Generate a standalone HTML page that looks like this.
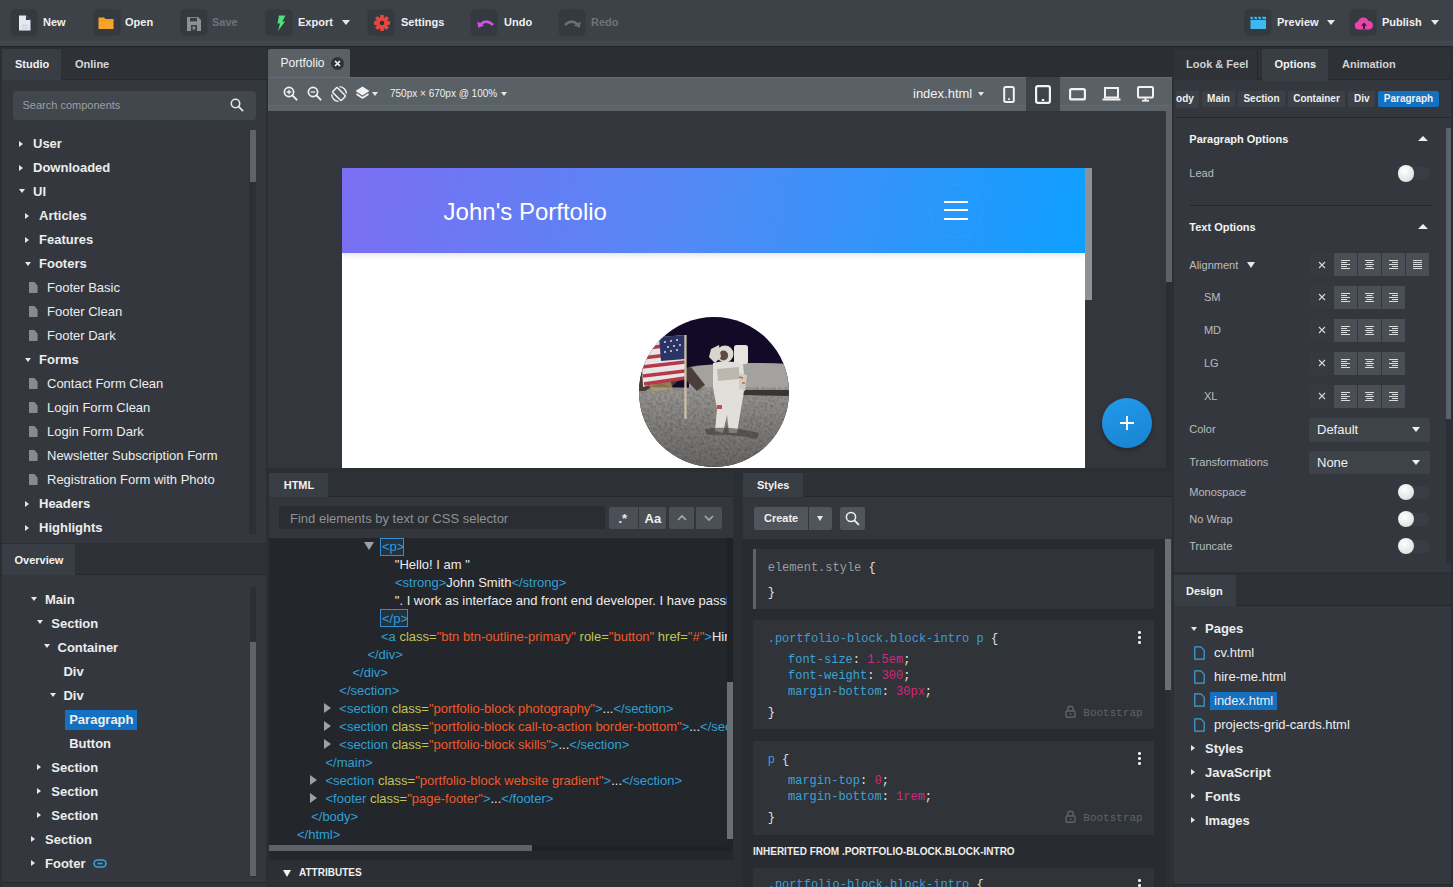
<!DOCTYPE html>
<html><head><meta charset="utf-8">
<style>
*{box-sizing:border-box;margin:0;padding:0}
html,body{width:1453px;height:887px;overflow:hidden}
body{background:#2b2e33;font-family:"Liberation Sans",sans-serif;color:#e8e8e8;position:relative}
.a{position:absolute}
.b{font-weight:bold}
.t{white-space:nowrap;line-height:1}
.ib{width:24px;height:22.5px;top:11.3px;background:#353940;border-radius:3px;box-shadow:0 0 2px 1px rgba(40,44,50,.6)}
.tl{top:17px;font-size:11px;font-weight:bold;color:#f0f0f0}
.tl.dis{color:#6e7378}
.car{width:0;height:0;border-left:4px solid transparent;border-right:4px solid transparent;border-top:5px solid #e8e8e8}
.pnl{background:#34383e}
.tabbar{background:#2e3237}
.tab{font-size:11px;font-weight:bold;color:#f2f2f2}
.tri-r{width:0;height:0;border-top:3.5px solid transparent;border-bottom:3.5px solid transparent;border-left:4px solid #e8e8e8}
.tri-d{width:0;height:0;border-left:3.5px solid transparent;border-right:3.5px solid transparent;border-top:4px solid #e8e8e8}
.tr{font-size:13px;color:#eceded}
.fi{width:9px;height:11px;background:#868b90;clip-path:polygon(0 0,65% 0,100% 30%,100% 100%,0 100%)}
.sb{background:#2c3035}
.sbt{background:#5f6469}
</style></head><body>
<div class="a" style="left:0;top:0;width:1453px;height:47px;background:#3d4249;border-bottom:1px solid #24282d"></div>
<div class="a" style="left:0;top:41px;width:1453px;height:5px;background:#41464c;border-top:1px solid #464b51"></div>
<div class="a ib" style="left:12px"></div>
<svg class="a" style="left:17.8px;top:15.2px" width="13" height="16" viewBox="0 0 13 16"><path d="M1 0.5H8L12.5 5V15.5H1Z" fill="#e4e9f1"/><path d="M8 0.5L12.5 5H8Z" fill="#2a3a5a"/><path d="M3 10.5H10.5M3 13H10.5M5.5 9V15.5M8 9V15.5" stroke="#c9ced6" stroke-width="0.6"/></svg>
<div class="a t tl" style="left:43px">New</div>
<div class="a ib" style="left:95px"></div>
<svg class="a" style="left:98.4px;top:15.2px" width="16" height="15" viewBox="0 0 16 15"><path d="M0.5 2.5H6L7.5 4H15.5V14H0.5Z" fill="#f7a42c"/><path d="M0.5 5.5H15.5" stroke="#e89520" stroke-width="0.6"/></svg>
<div class="a t tl" style="left:125px">Open</div>
<div class="a ib" style="left:182px"></div>
<svg class="a" style="left:186px;top:15.5px" width="16" height="16" viewBox="0 0 16 16"><path d="M1 1H12L15 4V15H1Z" fill="#8d9196"/><rect x="4" y="1.8" width="7" height="3.6" fill="#3a3e44"/><rect x="5" y="9" width="6" height="6" fill="#3a3e44"/><rect x="6.6" y="10.5" width="2.6" height="3" fill="#8d9196"/></svg>
<div class="a t tl dis" style="left:212px">Save</div>
<div class="a ib" style="left:266.7px"></div>
<svg class="a" style="left:272.5px;top:15.2px" width="16" height="16.5" viewBox="0 0 16 16.5"><path d="M6 0.5H12.5L9.3 6.5H12L5 16L7 8.5H4.5Z" fill="#4fe07a"/></svg>
<div class="a t tl" style="left:298px">Export</div>
<div class="a ib" style="left:369px"></div>
<svg class="a" style="left:373.8px;top:15px" width="16" height="16" viewBox="0 0 16 16"><g transform="translate(8 8)" fill="#e8463f"><circle r="5.6"/><rect x="-1.9" y="-8" width="3.8" height="16" rx="0.8"/><rect x="-1.9" y="-8" width="3.8" height="16" rx="0.8" transform="rotate(45)"/><rect x="-1.9" y="-8" width="3.8" height="16" rx="0.8" transform="rotate(90)"/><rect x="-1.9" y="-8" width="3.8" height="16" rx="0.8" transform="rotate(135)"/><circle r="2.3" fill="#2f3338"/></g></svg>
<div class="a t tl" style="left:401px">Settings</div>
<div class="a ib" style="left:472.3px"></div>
<svg class="a" style="left:476.5px;top:17.5px" width="17" height="10" viewBox="0 0 17 10"><path d="M3.5 6.5Q9.5 0.5 16 7" fill="none" stroke="#d64fe6" stroke-width="2.6"/><path d="M0.3 3.5L1.2 9.8L7.2 7.6Z" fill="#d64fe6"/></svg>
<div class="a t tl" style="left:504px">Undo</div>
<div class="a ib" style="left:560px"></div>
<svg class="a" style="left:564px;top:17.5px" width="17" height="10" viewBox="0 0 17 10"><path d="M13.5 6.5Q7.5 0.5 1 7" fill="none" stroke="#6a6f74" stroke-width="2.6"/><path d="M16.7 3.5L15.8 9.8L9.8 7.6Z" fill="#6a6f74"/></svg>
<div class="a t tl dis" style="left:591px">Redo</div>
<div class="a ib" style="left:1246px"></div>
<svg class="a" style="left:1249.8px;top:16.2px" width="17" height="14" viewBox="0 0 17 14"><rect x="0.5" y="4" width="15.5" height="9" fill="#3fb8f0"/><path d="M0.5 0.8H16V3.2H0.5Z" fill="#3fb8f0"/><path d="M3 0.8L4.5 3.2M7 0.8L8.5 3.2M11 0.8L12.5 3.2" stroke="#20262c" stroke-width="1.1"/></svg>
<div class="a t tl" style="left:1277px">Preview</div>
<div class="a ib" style="left:1351px"></div>
<svg class="a" style="left:1353.5px;top:15.5px" width="20" height="15" viewBox="0 0 20 15"><path d="M4.5 13.5A4 4 0 0 1 4 5.6A5.5 5.5 0 0 1 14.5 5A4.3 4.3 0 0 1 15.5 13.5Z" fill="#ea44a8"/><path d="M10 6.5L13 9.8H11V13H9V9.8H7Z" fill="#3a2030"/></svg>
<div class="a t tl" style="left:1382px">Publish</div>
<div class="a car" style="left:342px;top:20px"></div>
<div class="a car" style="left:1327px;top:20px"></div>
<div class="a car" style="left:1431px;top:20px"></div>
<div class="a pnl" style="left:2px;top:49px;width:264px;height:494px;overflow:hidden">
<div class="a tabbar" style="left:0;top:0;width:264px;height:31px;border-bottom:1px solid #26292e"></div>
<div class="a" style="left:0;top:0;width:59px;height:31px;background:#393d44"></div>
<div class="a t tab" style="left:13px;top:10px">Studio</div>
<div class="a t tab" style="left:73px;top:10px;color:#d6d8da">Online</div>
<div class="a" style="left:10.5px;top:41.5px;width:243.5px;height:29px;background:#42464d;border-radius:3px"></div>
<div class="a t" style="left:20.5px;top:51px;font-size:11px;color:#9c9fa4">Search components</div>
<svg class="a" style="left:228px;top:49px" width="14" height="14" viewBox="0 0 14 14"><circle cx="5.5" cy="5.5" r="4.2" fill="none" stroke="#e6e6e6" stroke-width="1.6"/><line x1="8.6" y1="8.6" x2="12.6" y2="12.6" stroke="#e6e6e6" stroke-width="1.8" stroke-linecap="round"/></svg>
<div class="a sb" style="left:247px;top:81px;width:7px;height:404px"></div>
<div class="a sbt" style="left:247.5px;top:81px;width:6.5px;height:52px"></div>
<div class="a tri-r" style="left:16.8px;top:91.8px"></div>
<div class="a t b" style="left:31px;top:88.10px;font-size:13px;color:#eceded">User</div>
<div class="a tri-r" style="left:16.8px;top:115.60000000000001px"></div>
<div class="a t b" style="left:31px;top:111.90px;font-size:13px;color:#eceded">Downloaded</div>
<div class="a tri-d" style="left:17px;top:140.4px"></div>
<div class="a t b" style="left:31px;top:135.90px;font-size:13px;color:#eceded">UI</div>
<div class="a tri-r" style="left:22.8px;top:163.6px"></div>
<div class="a t b" style="left:37px;top:159.90px;font-size:13px;color:#eceded">Articles</div>
<div class="a tri-r" style="left:22.8px;top:187.7px"></div>
<div class="a t b" style="left:37px;top:184.00px;font-size:13px;color:#eceded">Features</div>
<div class="a tri-d" style="left:23px;top:212.5px"></div>
<div class="a t b" style="left:37px;top:208.00px;font-size:13px;color:#eceded">Footers</div>
<div class="a fi" style="left:26.5px;top:233.10000000000002px"></div>
<div class="a t" style="left:45px;top:232.10px;font-size:13px;color:#eceded">Footer Basic</div>
<div class="a fi" style="left:26.5px;top:257.1px"></div>
<div class="a t" style="left:45px;top:256.10px;font-size:13px;color:#eceded">Footer Clean</div>
<div class="a fi" style="left:26.5px;top:281.1px"></div>
<div class="a t" style="left:45px;top:280.10px;font-size:13px;color:#eceded">Footer Dark</div>
<div class="a tri-d" style="left:23px;top:308.6px"></div>
<div class="a t b" style="left:37px;top:304.10px;font-size:13px;color:#eceded">Forms</div>
<div class="a fi" style="left:26.5px;top:329.1px"></div>
<div class="a t" style="left:45px;top:328.10px;font-size:13px;color:#eceded">Contact Form Clean</div>
<div class="a fi" style="left:26.5px;top:353.1px"></div>
<div class="a t" style="left:45px;top:352.10px;font-size:13px;color:#eceded">Login Form Clean</div>
<div class="a fi" style="left:26.5px;top:377.1px"></div>
<div class="a t" style="left:45px;top:376.10px;font-size:13px;color:#eceded">Login Form Dark</div>
<div class="a fi" style="left:26.5px;top:401.1px"></div>
<div class="a t" style="left:45px;top:400.10px;font-size:13px;color:#eceded">Newsletter Subscription Form</div>
<div class="a fi" style="left:26.5px;top:425.1px"></div>
<div class="a t" style="left:45px;top:424.10px;font-size:13px;color:#eceded">Registration Form with Photo</div>
<div class="a tri-r" style="left:22.8px;top:451.8px"></div>
<div class="a t b" style="left:37px;top:448.10px;font-size:13px;color:#eceded">Headers</div>
<div class="a tri-r" style="left:22.8px;top:475.8px"></div>
<div class="a t b" style="left:37px;top:472.10px;font-size:13px;color:#eceded">Highlights</div>
</div>
<div class="a pnl" style="left:2px;top:544px;width:264px;height:343px;overflow:hidden">
<div class="a tabbar" style="left:0;top:0;width:264px;height:31px;border-bottom:1px solid #26292e"></div>
<div class="a" style="left:0;top:0;width:73px;height:31px;background:#393d44"></div>
<div class="a t b" style="left:12.5px;top:10.80px;font-size:11px;color:#f2f2f2">Overview</div>
<div class="a sb" style="left:247.6px;top:43px;width:6.7px;height:289.5px"></div>
<div class="a sbt" style="left:247.6px;top:97.7px;width:6.7px;height:234.3px"></div>
<div class="a tri-d" style="left:29.3px;top:52.5px"></div>
<div class="a t b" style="left:43px;top:49.00px;font-size:13px;color:#eceded">Main</div>
<div class="a tri-d" style="left:35.2px;top:76.39999999999998px"></div>
<div class="a t b" style="left:49.3px;top:72.90px;font-size:13px;color:#eceded">Section</div>
<div class="a tri-d" style="left:41.8px;top:100.39999999999998px"></div>
<div class="a t b" style="left:55.5px;top:96.90px;font-size:13px;color:#eceded">Container</div>
<div class="a t b" style="left:61.4px;top:121.00px;font-size:13px;color:#eceded">Div</div>
<div class="a tri-d" style="left:47.7px;top:148.5px"></div>
<div class="a t b" style="left:61.4px;top:145.00px;font-size:13px;color:#eceded">Div</div>
<div class="a" style="left:63.3px;top:166.20000000000005px;width:71.7px;height:19.5px;background:#1470c0"></div>
<div class="a t b" style="left:67.2px;top:169.10px;font-size:13px;color:#eceded">Paragraph</div>
<div class="a t b" style="left:67.2px;top:193.00px;font-size:13px;color:#eceded">Button</div>
<div class="a tri-r" style="left:35.2px;top:220.0px"></div>
<div class="a t b" style="left:49.3px;top:217.00px;font-size:13px;color:#eceded">Section</div>
<div class="a tri-r" style="left:35.2px;top:244.0px"></div>
<div class="a t b" style="left:49.3px;top:241.00px;font-size:13px;color:#eceded">Section</div>
<div class="a tri-r" style="left:35.2px;top:268.0px"></div>
<div class="a t b" style="left:49.3px;top:265.00px;font-size:13px;color:#eceded">Section</div>
<div class="a tri-r" style="left:29.3px;top:292.0px"></div>
<div class="a t b" style="left:43px;top:289.00px;font-size:13px;color:#eceded">Section</div>
<div class="a tri-r" style="left:29.3px;top:316.0px"></div>
<div class="a t b" style="left:43px;top:313.00px;font-size:13px;color:#eceded">Footer</div>
<svg class="a" style="left:91px;top:315px" width="14" height="9" viewBox="0 0 14 9"><rect x="1" y="1" width="12" height="7" rx="3.5" fill="none" stroke="#3aa0e0" stroke-width="1.6"/><line x1="4.5" y1="4.5" x2="9.5" y2="4.5" stroke="#3aa0e0" stroke-width="1.6"/></svg>
</div>
<div class="a" style="left:268px;top:49px;width:82px;height:29px;background:#596066;border-radius:2px 2px 0 0"></div>
<div class="a t" style="left:280.5px;top:57.00px;font-size:12px;color:#f2f2f2">Portfolio</div>
<div class="a" style="left:330.5px;top:56.5px;width:13px;height:13px;border-radius:50%;background:#2f3337"></div>
<svg class="a" style="left:333.5px;top:59.5px" width="7" height="7" viewBox="0 0 7 7"><path d="M1 1L6 6M6 1L1 6" stroke="#f0f0f0" stroke-width="1.7"/></svg>
<div class="a" style="left:268px;top:77px;width:904px;height:34px;background:#596066;border-top:1px solid #646b71"></div>
<div class="a" style="left:268px;top:104.5px;width:904px;height:6px;background:#5c646a;border-top:1px solid #636a70"></div>
<div class="a" style="left:1026px;top:77px;width:34px;height:34px;background:#3d4349"></div>
<svg class="a" style="left:282.5px;top:86px" width="15" height="15" viewBox="0 0 15 15"><circle cx="6" cy="6" r="4.6" fill="none" stroke="#f2f2f2" stroke-width="1.7"/><line x1="9.4" y1="9.4" x2="13.6" y2="13.6" stroke="#f2f2f2" stroke-width="2" stroke-linecap="round"/><path d="M6 3.8V8.2M3.8 6H8.2" stroke="#f2f2f2" stroke-width="1.3"/></svg>
<svg class="a" style="left:306.5px;top:86px" width="15" height="15" viewBox="0 0 15 15"><circle cx="6" cy="6" r="4.6" fill="none" stroke="#f2f2f2" stroke-width="1.7"/><line x1="9.4" y1="9.4" x2="13.6" y2="13.6" stroke="#f2f2f2" stroke-width="2" stroke-linecap="round"/><path d="M3.8 6H8.2" stroke="#f2f2f2" stroke-width="1.3"/></svg>
<svg class="a" style="left:329.5px;top:85px" width="18" height="18" viewBox="0 0 18 18"><path d="M9.5 1.6A7.4 7.4 0 0 1 16.4 8.5M8.5 16.4A7.4 7.4 0 0 1 1.6 9.5" fill="none" stroke="#f2f2f2" stroke-width="1.4"/><rect x="5.7" y="2.8" width="6.6" height="12.4" rx="1" transform="rotate(-45 9 9)" fill="none" stroke="#f2f2f2" stroke-width="1.5"/></svg>
<svg class="a" style="left:354px;top:85px" width="17" height="17" viewBox="0 0 17 17"><path d="M8.5 1.5L15.5 6L8.5 10.5L1.5 6Z" fill="#f2f2f2"/><path d="M2.5 9L8.5 13L14.5 9" fill="none" stroke="#f2f2f2" stroke-width="1.8"/></svg>
<div class="a car" style="left:372px;top:92px;border-width:4px 3.5px 0 3.5px"></div>
<div class="a t" style="left:390px;top:88.50px;font-size:10px;color:#eef0f0">750px × 670px @ 100%</div>
<div class="a car" style="left:501px;top:92px;border-width:4px 3.5px 0 3.5px"></div>
<div class="a t" style="left:913px;top:87.00px;font-size:13px;color:#f2f2f2">index.html</div>
<div class="a car" style="left:977.5px;top:92px;border-width:4px 3.5px 0 3.5px"></div>
<svg class="a" style="left:1003px;top:85.5px" width="12" height="17" viewBox="0 0 12 17"><rect x="1.2" y="1" width="9.6" height="15" rx="1.5" fill="none" stroke="#f2f2f2" stroke-width="2"/><rect x="5" y="12.3" width="2" height="1.6" fill="#f2f2f2"/></svg>
<svg class="a" style="left:1035px;top:84.5px" width="16" height="19" viewBox="0 0 16 19"><rect x="1.1" y="1.1" width="13.8" height="16.8" rx="1.8" fill="none" stroke="#f2f2f2" stroke-width="2.2"/><rect x="6.8" y="14" width="2.4" height="2" fill="#f2f2f2"/></svg>
<svg class="a" style="left:1068.5px;top:88px" width="17" height="12.5" viewBox="0 0 17 12.5"><rect x="1.1" y="1.1" width="14.8" height="10.3" rx="1.5" fill="none" stroke="#f2f2f2" stroke-width="2.2"/></svg>
<svg class="a" style="left:1102px;top:87px" width="19" height="14" viewBox="0 0 19 14"><rect x="3" y="1" width="13" height="9.5" fill="none" stroke="#f2f2f2" stroke-width="2"/><rect x="0.5" y="11.5" width="18" height="2" fill="#f2f2f2"/></svg>
<svg class="a" style="left:1136.5px;top:86px" width="17" height="16" viewBox="0 0 17 16"><rect x="1" y="1" width="15" height="10.5" rx="1" fill="none" stroke="#f2f2f2" stroke-width="2"/><rect x="7.5" y="11.5" width="2" height="2.5" fill="#f2f2f2"/><rect x="5" y="13.8" width="7" height="1.8" fill="#f2f2f2"/></svg>
<div class="a" style="left:268px;top:111px;width:904px;height:357px;background:#33363c"></div>
<div class="a" style="left:1166px;top:111px;width:6px;height:357px;background:#2b2e33"></div>
<div class="a" style="left:1166px;top:111px;width:6px;height:171px;background:#5d6268"></div>
<div class="a" style="left:342px;top:168px;width:743px;height:300px;background:#fff;overflow:hidden">
<div class="a" style="left:0;top:0;width:743px;height:85px;background:linear-gradient(100deg,#7b6ef2 0%,#5588f5 45%,#0ea0ff 100%);box-shadow:0 2px 6px rgba(0,0,0,.12)"></div>
<div class="a t" style="left:101.6px;top:31.50px;font-size:24px;color:#ffffff">John's Porftolio</div>
<div class="a" style="left:587px;top:16px;width:54px;height:54px;border-radius:50%;border:1px solid rgba(255,255,255,.04)"></div>
<div class="a" style="left:601.7px;top:33px;width:24.3px;height:2px;background:#fff"></div>
<div class="a" style="left:601.7px;top:41.3px;width:24.3px;height:2px;background:#fff"></div>
<div class="a" style="left:601.7px;top:49.8px;width:24.3px;height:2px;background:#fff"></div>
</div>
<div class="a" style="left:1085px;top:168px;width:7px;height:132px;background:#8f9295"></div>
<svg class="a" style="left:639px;top:317px" width="150" height="151" viewBox="0 0 150 151"><defs><clipPath id="cc"><circle cx="75" cy="75" r="75"/></clipPath>
<linearGradient id="gnd" x1="0" y1="0" x2="0" y2="1"><stop offset="0" stop-color="#9b9996"/><stop offset="0.5" stop-color="#817f7c"/><stop offset="1" stop-color="#6a6866"/></linearGradient>
<filter id="nz" x="0" y="0" width="100%" height="100%"><feTurbulence type="fractalNoise" baseFrequency="0.35" numOctaves="2" seed="3"/><feColorMatrix type="matrix" values="0 0 0 0 0  0 0 0 0 0  0 0 0 0 0  0 0 0 -1.6 1.05"/><feComposite in2="SourceGraphic" operator="in"/></filter></defs>
<g clip-path="url(#cc)">
<rect width="150" height="151" fill="#120a26"/>
<path d="M50 50 Q90 44 150 47 L150 80 L50 80Z" fill="#a3a29f"/>
<path d="M0 70 L150 72 L150 151 L0 151Z" fill="url(#gnd)"/>
<rect x="0" y="70" width="150" height="81" fill="#2a2624" filter="url(#nz)" opacity=".25"/>
<path d="M103 73 L150 73 L150 79 L103 78Z" fill="#3a3532"/>
<path d="M0 50 L10 48 L28 54 L52 50 L66 68 L58 74 L44 60 L32 70 L20 66 L6 74 L0 74Z" fill="#4a3f38"/>
<path d="M8 62 L30 60 L34 72 L12 74Z" fill="#b59a60" opacity=".7"/>
<path d="M2 26 L22 20 L46 18 L46 62 L24 64 L4 70Z" fill="#e9e4e6"/>
<path d="M2 32 L46 26 M3 41 L46 36 M3 50 L46 45 M4 59 L46 54 M5 67 L46 61" stroke="#b53a48" stroke-width="3.6"/>
<path d="M20 20 L46 18 L46 42 L22 44Z" fill="#2c3466"/>
<path d="M25 25h2M31 24h2M37 23h2M28 30h2M34 29h2M40 28h2M25 35h2M31 34h2M37 33h2" stroke="#d8dbe8" stroke-width="1.4"/>
<rect x="45.3" y="18" width="2.3" height="84" fill="#c9bfa6"/>
<rect x="95" y="28" width="14" height="19" rx="2.5" fill="#e6e4de"/>
<circle cx="86" cy="37" r="8.5" fill="#dedbd4"/>
<ellipse cx="84.5" cy="38.5" rx="4.6" ry="5" fill="#5d4d44"/>
<path d="M72 32 L80 28 L82 40 L76 46 L70 40Z" fill="#d8d5cf"/>
<path d="M74 46 Q88 42 104 47 L106 68 L102 92 L98 116 L90 116 L88 98 L84 116 L76 114 L78 92 L74 70Z" fill="#e1dfda"/>
<path d="M78 52 L100 50 L100 62 L79 64Z" fill="#bcb8b0"/>
<path d="M100 56 L108 58 L106 74 L100 72Z" fill="#cfccc5"/>
<rect x="78" y="88" width="5" height="4" fill="#c34a4e"/>
<path d="M100 60 L104 61 M103 66 L106 66" stroke="#d06040" stroke-width="1.5"/>
<path d="M66 112 Q90 108 120 116 L118 122 Q90 116 68 118Z" fill="#3f3b39" opacity=".6"/>
</g></svg>
<div class="a" style="left:1101.8px;top:397.7px;width:50px;height:50px;border-radius:50%;background:linear-gradient(160deg,#229aec,#1783cf);box-shadow:0 2px 4px rgba(0,0,0,.3)"></div>
<svg class="a" style="left:1118.8px;top:414.7px" width="16" height="16" viewBox="0 0 16 16"><path d="M8 1V15M1 8H15" stroke="#fff" stroke-width="1.8"/></svg>
<div class="a" style="left:269px;top:473px;width:464px;height:414px;background:#33363c"></div>
<div class="a tabbar" style="left:269px;top:473px;width:464px;height:24px;border-bottom:1px solid #26292e"></div>
<div class="a" style="left:269px;top:473px;width:58.6px;height:24px;background:#393d44"></div>
<div class="a t b" style="left:283.7px;top:480.00px;font-size:11px;color:#f2f2f2">HTML</div>
<div class="a" style="left:279px;top:506.3px;width:326px;height:23px;background:#2a2d32;border-radius:2px"></div>
<div class="a t" style="left:290px;top:511.50px;font-size:13px;color:#8e9297">Find elements by text or CSS selector</div>
<div class="a" style="left:608.6px;top:507px;width:29.0px;height:22px;background:#4b5056;border-radius:2px 0 0 2px"></div>
<div class="a" style="left:639px;top:507px;width:27px;height:22px;background:#4b5056;border-radius:0 2px 2px 0"></div>
<div class="a" style="left:668.7px;top:507px;width:25.799999999999955px;height:22px;background:#4b5056;border-radius:2px 0 0 2px"></div>
<div class="a" style="left:696px;top:507px;width:26px;height:22px;background:#4b5056;border-radius:0 2px 2px 0"></div>
<div class="a t b" style="left:618.5px;top:511.50px;font-size:13px;color:#e8e8e8">.*</div>
<div class="a t b" style="left:644.5px;top:511.50px;font-size:13px;color:#f0f0f0">Aa</div>
<svg class="a" style="left:676.5px;top:514px" width="10" height="7" viewBox="0 0 10 7"><path d="M1 6L5 2L9 6" fill="none" stroke="#a7abaf" stroke-width="1.6"/></svg>
<svg class="a" style="left:704px;top:515px" width="10" height="7" viewBox="0 0 10 7"><path d="M1 1L5 5L9 1" fill="none" stroke="#a7abaf" stroke-width="1.6"/></svg>
<div class="a" style="left:269px;top:538px;width:464px;height:313px;background:#23262a;overflow:hidden" id="code">
<div class="a" style="left:95.0px;top:4px;width:0;height:0;border-left:5px solid transparent;border-right:5px solid transparent;border-top:8px solid #9da1a5"></div>
<div class="a t" style="left:113px;top:1.50px;font-size:13px"><span style="color:#2fa0da">&lt;p&gt;</span></div>
<div class="a t" style="left:125.80000000000001px;top:19.50px;font-size:13px"><span style="color:#ececec">&quot;Hello! I am &quot;</span></div>
<div class="a t" style="left:126px;top:37.50px;font-size:13px"><span style="color:#2fa0da">&lt;strong&gt;</span><span style="color:#ececec">John Smith</span><span style="color:#2fa0da">&lt;/strong&gt;</span></div>
<div class="a t" style="left:125.80000000000001px;top:55.50px;font-size:13px"><span style="color:#ececec">&quot;. I work as interface and front end developer. I have passion for pixel perfect</span></div>
<div class="a t" style="left:113px;top:73.50px;font-size:13px"><span style="color:#2fa0da">&lt;/p&gt;</span></div>
<div class="a t" style="left:112px;top:91.50px;font-size:13px"><span style="color:#2fa0da">&lt;a </span><span style="color:#c3c457">class=</span><span style="color:#ef5a2a">&quot;btn btn-outline-primary&quot;</span><span style="color:#c3c457"> role=</span><span style="color:#ef5a2a">&quot;button&quot;</span><span style="color:#c3c457"> href=</span><span style="color:#ef5a2a">&quot;#&quot;</span><span style="color:#2fa0da">&gt;</span><span style="color:#ececec">Hire me</span></div>
<div class="a t" style="left:98.39999999999998px;top:109.50px;font-size:13px"><span style="color:#2fa0da">&lt;/div&gt;</span></div>
<div class="a t" style="left:83.5px;top:127.50px;font-size:13px"><span style="color:#2fa0da">&lt;/div&gt;</span></div>
<div class="a t" style="left:70.30000000000001px;top:146.00px;font-size:13px"><span style="color:#2fa0da">&lt;/section&gt;</span></div>
<div class="a" style="left:54.80000000000001px;top:164.8px;width:0;height:0;border-top:5px solid transparent;border-bottom:5px solid transparent;border-left:7px solid #9da1a5"></div>
<div class="a t" style="left:70.30000000000001px;top:164.00px;font-size:13px"><span style="color:#2fa0da">&lt;section </span><span style="color:#c3c457">class=</span><span style="color:#ef5a2a">&quot;portfolio-block photography&quot;</span><span style="color:#2fa0da">&gt;</span><span style="color:#ececec">...</span><span style="color:#2fa0da">&lt;/section&gt;</span></div>
<div class="a" style="left:54.80000000000001px;top:182.8px;width:0;height:0;border-top:5px solid transparent;border-bottom:5px solid transparent;border-left:7px solid #9da1a5"></div>
<div class="a t" style="left:70.30000000000001px;top:182.00px;font-size:13px"><span style="color:#2fa0da">&lt;section </span><span style="color:#c3c457">class=</span><span style="color:#ef5a2a">&quot;portfolio-block call-to-action border-bottom&quot;</span><span style="color:#2fa0da">&gt;</span><span style="color:#ececec">...</span><span style="color:#2fa0da">&lt;/section&gt;</span></div>
<div class="a" style="left:54.80000000000001px;top:200.8px;width:0;height:0;border-top:5px solid transparent;border-bottom:5px solid transparent;border-left:7px solid #9da1a5"></div>
<div class="a t" style="left:70.30000000000001px;top:200.00px;font-size:13px"><span style="color:#2fa0da">&lt;section </span><span style="color:#c3c457">class=</span><span style="color:#ef5a2a">&quot;portfolio-block skills&quot;</span><span style="color:#2fa0da">&gt;</span><span style="color:#ececec">...</span><span style="color:#2fa0da">&lt;/section&gt;</span></div>
<div class="a t" style="left:56.5px;top:218.00px;font-size:13px"><span style="color:#2fa0da">&lt;/main&gt;</span></div>
<div class="a" style="left:40.60000000000002px;top:236.8px;width:0;height:0;border-top:5px solid transparent;border-bottom:5px solid transparent;border-left:7px solid #9da1a5"></div>
<div class="a t" style="left:56.5px;top:236.00px;font-size:13px"><span style="color:#2fa0da">&lt;section </span><span style="color:#c3c457">class=</span><span style="color:#ef5a2a">&quot;portfolio-block website gradient&quot;</span><span style="color:#2fa0da">&gt;</span><span style="color:#ececec">...</span><span style="color:#2fa0da">&lt;/section&gt;</span></div>
<div class="a" style="left:40.60000000000002px;top:254.8px;width:0;height:0;border-top:5px solid transparent;border-bottom:5px solid transparent;border-left:7px solid #9da1a5"></div>
<div class="a t" style="left:56.5px;top:254.00px;font-size:13px"><span style="color:#2fa0da">&lt;footer </span><span style="color:#c3c457">class=</span><span style="color:#ef5a2a">&quot;page-footer&quot;</span><span style="color:#2fa0da">&gt;</span><span style="color:#ececec">...</span><span style="color:#2fa0da">&lt;/footer&gt;</span></div>
<div class="a t" style="left:42.19999999999999px;top:272.00px;font-size:13px"><span style="color:#2fa0da">&lt;/body&gt;</span></div>
<div class="a t" style="left:28px;top:290.00px;font-size:13px"><span style="color:#2fa0da">&lt;/html&gt;</span></div>
<div class="a" style="left:111px;top:0.39999999999997726px;width:24px;height:18px;border:1px solid #2f8fd0;background:rgba(47,143,208,.12)"></div>
<div class="a" style="left:111px;top:71px;width:28px;height:18px;border:1px solid #2f8fd0;background:rgba(47,143,208,.12)"></div>
<div class="a" style="left:458px;top:0;width:6px;height:307px;background:#1f2226"></div>
<div class="a" style="left:458.29999999999995px;top:144px;width:5.7px;height:156.60000000000002px;background:#6b7075"></div>
</div>
<div class="a" style="left:269px;top:845px;width:462px;height:6px;background:#1f2226"></div>
<div class="a" style="left:269px;top:845px;width:263px;height:6px;background:#5d6268"></div>
<div class="a" style="left:269px;top:851px;width:464px;height:9px;background:#24272b"></div>
<div class="a" style="left:269px;top:860px;width:464px;height:27px;background:#2c2f34"></div>
<div class="a" style="left:283px;top:869.5px;width:0;height:0;border-left:4px solid transparent;border-right:4px solid transparent;border-top:7px solid #f0f0f0"></div>
<div class="a t b" style="left:299px;top:868.00px;font-size:10px;color:#f0f0f0">ATTRIBUTES</div>
<div class="a" style="left:743px;top:473px;width:429px;height:414px;background:#33363c"></div>
<div class="a tabbar" style="left:743px;top:473px;width:429px;height:24px;border-bottom:1px solid #26292e"></div>
<div class="a" style="left:743px;top:473px;width:60px;height:24px;background:#393d44"></div>
<div class="a t b" style="left:757px;top:480.00px;font-size:11px;color:#f2f2f2">Styles</div>
<div class="a" style="left:754px;top:507.4px;width:54px;height:22.5px;background:#50555b;border-radius:2px 0 0 2px"></div>
<div class="a" style="left:808.5px;top:507.4px;width:23.5px;height:22.5px;background:#50555b;border-radius:0 2px 2px 0"></div>
<div class="a t b" style="left:764px;top:513.00px;font-size:11px;color:#f0f0f0">Create</div>
<div class="a" style="left:816.5px;top:516px;width:0;height:0;border-left:3.5px solid transparent;border-right:3.5px solid transparent;border-top:5px solid #e8e8e8"></div>
<div class="a" style="left:839.5px;top:507.4px;width:25px;height:22.5px;background:#50555b;border-radius:2px"></div>
<svg class="a" style="left:844.5px;top:511px" width="15" height="15" viewBox="0 0 15 15"><circle cx="6" cy="6" r="4.6" fill="none" stroke="#f2f2f2" stroke-width="1.5"/><line x1="9.4" y1="9.4" x2="13.4" y2="13.4" stroke="#f2f2f2" stroke-width="1.8" stroke-linecap="round"/></svg>
<div class="a" style="left:743px;top:539px;width:422px;height:348px;background:#282b2f;overflow:hidden" id="sty">
<div class="a" style="left:10px;top:10px;width:401.4px;height:60px;background:#303338"></div>
<div class="a" style="left:10px;top:10px;width:3px;height:60px;background:#5e6368"></div>
<div class="a t" style="left:24.700000000000045px;top:23.399999999999977px;font-family:'Liberation Mono',monospace;font-size:12px;line-height:13px"><span style="color:#9a9c9f">element.style </span><span style="color:#e0e0e0">{</span></div>
<div class="a t" style="left:24.700000000000045px;top:47.60000000000002px;font-family:'Liberation Mono',monospace;font-size:12px;line-height:13px"><span style="color:#e0e0e0">}</span></div>
<div class="a" style="left:10px;top:81px;width:401.4px;height:109px;background:#303338"></div>
<div class="a t" style="left:24.700000000000045px;top:93.60000000000002px;font-family:'Liberation Mono',monospace;font-size:12px;line-height:13px"><span style="color:#3b9fd6">.portfolio-block.block-intro p </span><span style="color:#e0e0e0">{</span></div>
<div class="a t" style="left:45px;top:114.79999999999995px;font-family:'Liberation Mono',monospace;font-size:12px;line-height:13px"><span style="color:#3aa4d6">font-size</span><span style="color:#e0e0e0">: </span><span style="color:#d2297c">1.5em</span><span style="color:#e0e0e0">;</span></div>
<div class="a t" style="left:45px;top:130.89999999999998px;font-family:'Liberation Mono',monospace;font-size:12px;line-height:13px"><span style="color:#3aa4d6">font-weight</span><span style="color:#e0e0e0">: </span><span style="color:#d2297c">300</span><span style="color:#e0e0e0">;</span></div>
<div class="a t" style="left:45px;top:147px;font-family:'Liberation Mono',monospace;font-size:12px;line-height:13px"><span style="color:#3aa4d6">margin-bottom</span><span style="color:#e0e0e0">: </span><span style="color:#d2297c">30px</span><span style="color:#e0e0e0">;</span></div>
<div class="a t" style="left:24.700000000000045px;top:167.79999999999995px;font-family:'Liberation Mono',monospace;font-size:12px;line-height:13px"><span style="color:#e0e0e0">}</span></div>
<div class="a" style="left:394.79999999999995px;top:91px;width:3px;height:14px;background:radial-gradient(circle,#f0f0f0 1.3px,transparent 1.6px) 0 0/3px 5px repeat-y"></div>
<svg class="a" style="left:321.5px;top:166.0px" width="11" height="13" viewBox="0 0 11 13"><path d="M2.8 6V4A2.7 2.7 0 0 1 8.2 4V6" fill="none" stroke="#5f6367" stroke-width="1.4"/><rect x="1" y="6" width="9" height="6.3" rx="1" fill="none" stroke="#5f6367" stroke-width="1.4"/><rect x="5" y="8.3" width="1.2" height="2" fill="#5f6367"/></svg>
<div class="a t" style="left:340.29999999999995px;top:167.5px;font-family:'Liberation Mono',monospace;font-size:11px;line-height:13px"><span style="color:#5f6367">Bootstrap</span></div>
<div class="a" style="left:10px;top:201.60000000000002px;width:401.4px;height:94.39999999999998px;background:#303338"></div>
<div class="a t" style="left:24.700000000000045px;top:214.70000000000005px;font-family:'Liberation Mono',monospace;font-size:12px;line-height:13px"><span style="color:#3b9fd6">p </span><span style="color:#e0e0e0">{</span></div>
<div class="a t" style="left:45px;top:236px;font-family:'Liberation Mono',monospace;font-size:12px;line-height:13px"><span style="color:#3aa4d6">margin-top</span><span style="color:#e0e0e0">: </span><span style="color:#d2297c">0</span><span style="color:#e0e0e0">;</span></div>
<div class="a t" style="left:45px;top:252px;font-family:'Liberation Mono',monospace;font-size:12px;line-height:13px"><span style="color:#3aa4d6">margin-bottom</span><span style="color:#e0e0e0">: </span><span style="color:#d2297c">1rem</span><span style="color:#e0e0e0">;</span></div>
<div class="a t" style="left:24.700000000000045px;top:272.9px;font-family:'Liberation Mono',monospace;font-size:12px;line-height:13px"><span style="color:#e0e0e0">}</span></div>
<div class="a" style="left:394.79999999999995px;top:212px;width:3px;height:14px;background:radial-gradient(circle,#f0f0f0 1.3px,transparent 1.6px) 0 0/3px 5px repeat-y"></div>
<svg class="a" style="left:321.5px;top:271.0px" width="11" height="13" viewBox="0 0 11 13"><path d="M2.8 6V4A2.7 2.7 0 0 1 8.2 4V6" fill="none" stroke="#5f6367" stroke-width="1.4"/><rect x="1" y="6" width="9" height="6.3" rx="1" fill="none" stroke="#5f6367" stroke-width="1.4"/><rect x="5" y="8.3" width="1.2" height="2" fill="#5f6367"/></svg>
<div class="a t" style="left:340.29999999999995px;top:272.5px;font-family:'Liberation Mono',monospace;font-size:11px;line-height:13px"><span style="color:#5f6367">Bootstrap</span></div>
<div class="a t b" style="left:10px;top:307.70px;font-size:10px;color:#eeeeee">INHERITED FROM .PORTFOLIO-BLOCK.BLOCK-INTRO</div>
<div class="a" style="left:10px;top:329px;width:401.4px;height:32px;background:#303338"></div>
<div class="a t" style="left:24.700000000000045px;top:340.4px;font-family:'Liberation Mono',monospace;font-size:12px;line-height:13px"><span style="color:#3b9fd6">.portfolio-block.block-intro </span><span style="color:#e0e0e0">{</span></div>
<div class="a" style="left:394.79999999999995px;top:339px;width:3px;height:14px;background:radial-gradient(circle,#f0f0f0 1.3px,transparent 1.6px) 0 0/3px 5px repeat-y"></div>
</div>
<div class="a" style="left:1165px;top:539px;width:6px;height:348px;background:#2b2e33"></div>
<div class="a" style="left:1165px;top:539px;width:6px;height:151px;background:#6a6f74"></div>
<div class="a" style="left:1172px;top:47px;width:281px;height:840px;background:#2b2e33"></div>
<div class="a pnl" style="left:1173.5px;top:49px;width:279.5px;height:523px"></div>
<div class="a tabbar" style="left:1173.5px;top:49px;width:279.5px;height:30.5px;border-bottom:1px solid #26292e"></div>
<div class="a" style="left:1173.5px;top:49px;width:84.5px;height:30.5px;background:#2f3338;border-right:1px solid #25282d"></div>
<div class="a" style="left:1262px;top:49px;width:65.6px;height:31.5px;background:#393d44"></div>
<div class="a t b" style="left:1186px;top:58.50px;font-size:11px;color:#cfd1d4">Look &amp; Feel</div>
<div class="a t b" style="left:1274.5px;top:58.50px;font-size:11px;color:#f2f2f2">Options</div>
<div class="a t b" style="left:1342px;top:58.50px;font-size:11px;color:#cfd1d4">Animation</div>
<div class="a" style="left:1176px;top:90.8px;width:22.7px;height:16.8px;overflow:hidden"><div class="a" style="left:-12px;top:0;width:34.7px;height:16.8px;background:#3c4147;border-radius:2px"></div><div class="a t b" style="left:-12px;top:3.2px;width:34.7px;text-align:center;font-size:10px;color:#f0f0f0">Body</div></div>
<div class="a" style="left:1201.6px;top:91px;width:33.700000000000045px;height:15.8px;background:#3c4147;border-radius:2px"></div>
<div class="a t b" style="left:1201.6px;top:94px;width:33.700000000000045px;text-align:center;font-size:10px;color:#f0f0f0">Main</div>
<div class="a" style="left:1238px;top:91px;width:47px;height:15.8px;background:#3c4147;border-radius:2px"></div>
<div class="a t b" style="left:1238px;top:94px;width:47px;text-align:center;font-size:10px;color:#f0f0f0">Section</div>
<div class="a" style="left:1288px;top:91px;width:57px;height:15.8px;background:#3c4147;border-radius:2px"></div>
<div class="a t b" style="left:1288px;top:94px;width:57px;text-align:center;font-size:10px;color:#f0f0f0">Container</div>
<div class="a" style="left:1348px;top:91px;width:27.40000000000009px;height:15.8px;background:#3c4147;border-radius:2px"></div>
<div class="a t b" style="left:1348px;top:94px;width:27.40000000000009px;text-align:center;font-size:10px;color:#f0f0f0">Div</div>
<div class="a" style="left:1378px;top:91px;width:61px;height:15.8px;background:#1470c0;border-radius:2px"></div>
<div class="a t b" style="left:1378px;top:94px;width:61px;text-align:center;font-size:10px;color:#f0f0f0">Paragraph</div>
<div class="a" style="left:1175.5px;top:117px;width:277.5px;height:1px;background:#26292e"></div>
<div class="a t b" style="left:1189.3px;top:133.50px;font-size:11px;color:#f2f2f2">Paragraph Options</div>
<div class="a" style="left:1418.4px;top:136px;width:0;height:0;border-left:5px solid transparent;border-right:5px solid transparent;border-bottom:5px solid #f0f0f0"></div>
<div class="a t" style="left:1189.3px;top:167.80px;font-size:11px;color:#b9bcbf">Lead</div>
<div class="a" style="left:1399px;top:167.0px;width:30.6px;height:13px;border-radius:6.5px;background:#3a3e44"></div>
<div class="a" style="left:1397.6px;top:165.3px;width:16.4px;height:16.4px;border-radius:50%;background:radial-gradient(circle at 40% 35%,#ffffff,#d6d6d6)"></div>
<div class="a" style="left:1190px;top:205px;width:242px;height:1px;background:#25282d"></div>
<div class="a t b" style="left:1189.3px;top:221.50px;font-size:11px;color:#f2f2f2">Text Options</div>
<div class="a" style="left:1418.4px;top:224px;width:0;height:0;border-left:5px solid transparent;border-right:5px solid transparent;border-bottom:5px solid #f0f0f0"></div>
<div class="a t" style="left:1189.3px;top:259.50px;font-size:11px;color:#b9bcbf">Alignment</div>
<div class="a" style="left:1246.5px;top:262px;width:0;height:0;border-left:4px solid transparent;border-right:4px solid transparent;border-top:6px solid #e8e8e8"></div>
<div class="a" style="left:1310px;top:253.3px;width:23.3px;height:22.8px;background:#363a40"></div>
<svg class="a" style="left:1317.6px;top:260.7px" width="8" height="8" viewBox="0 0 8 8"><path d="M1 1L7 7M7 1L1 7" stroke="#d8d8d8" stroke-width="1.1"/></svg>
<div class="a" style="left:1334px;top:253.3px;width:23.3px;height:22.8px;background:#4a4f55"></div>
<svg class="a" style="left:1341.1px;top:260.2px" width="9" height="9" viewBox="0 0 9 9"><rect x="0" y="0.0" width="9" height="1" fill="#dcdcdc"/><rect x="0" y="2.0" width="6" height="1" fill="#dcdcdc"/><rect x="0" y="4.0" width="9" height="1" fill="#dcdcdc"/><rect x="0" y="6.0" width="6" height="1" fill="#dcdcdc"/><rect x="0" y="8.0" width="9" height="1" fill="#dcdcdc"/></svg>
<div class="a" style="left:1358px;top:253.3px;width:23.3px;height:22.8px;background:#4a4f55"></div>
<svg class="a" style="left:1365.1px;top:260.2px" width="9" height="9" viewBox="0 0 9 9"><rect x="0" y="0.0" width="9" height="1" fill="#dcdcdc"/><rect x="1.5" y="2.0" width="6.0" height="1" fill="#dcdcdc"/><rect x="0" y="4.0" width="9" height="1" fill="#dcdcdc"/><rect x="1.5" y="6.0" width="6.0" height="1" fill="#dcdcdc"/><rect x="0" y="8.0" width="9" height="1" fill="#dcdcdc"/></svg>
<div class="a" style="left:1382px;top:253.3px;width:23.3px;height:22.8px;background:#4a4f55"></div>
<svg class="a" style="left:1389.1px;top:260.2px" width="9" height="9" viewBox="0 0 9 9"><rect x="0" y="0.0" width="9" height="1" fill="#dcdcdc"/><rect x="3" y="2.0" width="6" height="1" fill="#dcdcdc"/><rect x="0" y="4.0" width="9" height="1" fill="#dcdcdc"/><rect x="3" y="6.0" width="6" height="1" fill="#dcdcdc"/><rect x="0" y="8.0" width="9" height="1" fill="#dcdcdc"/></svg>
<div class="a" style="left:1406px;top:253.3px;width:23.3px;height:22.8px;background:#4a4f55"></div>
<svg class="a" style="left:1413.1px;top:260.2px" width="9" height="9" viewBox="0 0 9 9"><rect x="0" y="0.0" width="9" height="1" fill="#dcdcdc"/><rect x="0" y="2.0" width="9" height="1" fill="#dcdcdc"/><rect x="0" y="4.0" width="9" height="1" fill="#dcdcdc"/><rect x="0" y="6.0" width="9" height="1" fill="#dcdcdc"/><rect x="0" y="8.0" width="9" height="1" fill="#dcdcdc"/></svg>
<div class="a t" style="left:1203.9px;top:292.10px;font-size:11px;color:#b9bcbf">SM</div>
<div class="a" style="left:1310px;top:286px;width:23.3px;height:22.8px;background:#363a40"></div>
<svg class="a" style="left:1317.6px;top:293.4px" width="8" height="8" viewBox="0 0 8 8"><path d="M1 1L7 7M7 1L1 7" stroke="#d8d8d8" stroke-width="1.1"/></svg>
<div class="a" style="left:1334px;top:286px;width:23.3px;height:22.8px;background:#4a4f55"></div>
<svg class="a" style="left:1341.1px;top:292.9px" width="9" height="9" viewBox="0 0 9 9"><rect x="0" y="0.0" width="9" height="1" fill="#dcdcdc"/><rect x="0" y="2.0" width="6" height="1" fill="#dcdcdc"/><rect x="0" y="4.0" width="9" height="1" fill="#dcdcdc"/><rect x="0" y="6.0" width="6" height="1" fill="#dcdcdc"/><rect x="0" y="8.0" width="9" height="1" fill="#dcdcdc"/></svg>
<div class="a" style="left:1358px;top:286px;width:23.3px;height:22.8px;background:#4a4f55"></div>
<svg class="a" style="left:1365.1px;top:292.9px" width="9" height="9" viewBox="0 0 9 9"><rect x="0" y="0.0" width="9" height="1" fill="#dcdcdc"/><rect x="1.5" y="2.0" width="6.0" height="1" fill="#dcdcdc"/><rect x="0" y="4.0" width="9" height="1" fill="#dcdcdc"/><rect x="1.5" y="6.0" width="6.0" height="1" fill="#dcdcdc"/><rect x="0" y="8.0" width="9" height="1" fill="#dcdcdc"/></svg>
<div class="a" style="left:1382px;top:286px;width:23.3px;height:22.8px;background:#4a4f55"></div>
<svg class="a" style="left:1389.1px;top:292.9px" width="9" height="9" viewBox="0 0 9 9"><rect x="0" y="0.0" width="9" height="1" fill="#dcdcdc"/><rect x="3" y="2.0" width="6" height="1" fill="#dcdcdc"/><rect x="0" y="4.0" width="9" height="1" fill="#dcdcdc"/><rect x="3" y="6.0" width="6" height="1" fill="#dcdcdc"/><rect x="0" y="8.0" width="9" height="1" fill="#dcdcdc"/></svg>
<div class="a t" style="left:1203.9px;top:325.20px;font-size:11px;color:#b9bcbf">MD</div>
<div class="a" style="left:1310px;top:319px;width:23.3px;height:22.8px;background:#363a40"></div>
<svg class="a" style="left:1317.6px;top:326.4px" width="8" height="8" viewBox="0 0 8 8"><path d="M1 1L7 7M7 1L1 7" stroke="#d8d8d8" stroke-width="1.1"/></svg>
<div class="a" style="left:1334px;top:319px;width:23.3px;height:22.8px;background:#4a4f55"></div>
<svg class="a" style="left:1341.1px;top:325.9px" width="9" height="9" viewBox="0 0 9 9"><rect x="0" y="0.0" width="9" height="1" fill="#dcdcdc"/><rect x="0" y="2.0" width="6" height="1" fill="#dcdcdc"/><rect x="0" y="4.0" width="9" height="1" fill="#dcdcdc"/><rect x="0" y="6.0" width="6" height="1" fill="#dcdcdc"/><rect x="0" y="8.0" width="9" height="1" fill="#dcdcdc"/></svg>
<div class="a" style="left:1358px;top:319px;width:23.3px;height:22.8px;background:#4a4f55"></div>
<svg class="a" style="left:1365.1px;top:325.9px" width="9" height="9" viewBox="0 0 9 9"><rect x="0" y="0.0" width="9" height="1" fill="#dcdcdc"/><rect x="1.5" y="2.0" width="6.0" height="1" fill="#dcdcdc"/><rect x="0" y="4.0" width="9" height="1" fill="#dcdcdc"/><rect x="1.5" y="6.0" width="6.0" height="1" fill="#dcdcdc"/><rect x="0" y="8.0" width="9" height="1" fill="#dcdcdc"/></svg>
<div class="a" style="left:1382px;top:319px;width:23.3px;height:22.8px;background:#4a4f55"></div>
<svg class="a" style="left:1389.1px;top:325.9px" width="9" height="9" viewBox="0 0 9 9"><rect x="0" y="0.0" width="9" height="1" fill="#dcdcdc"/><rect x="3" y="2.0" width="6" height="1" fill="#dcdcdc"/><rect x="0" y="4.0" width="9" height="1" fill="#dcdcdc"/><rect x="3" y="6.0" width="6" height="1" fill="#dcdcdc"/><rect x="0" y="8.0" width="9" height="1" fill="#dcdcdc"/></svg>
<div class="a t" style="left:1203.9px;top:358.00px;font-size:11px;color:#b9bcbf">LG</div>
<div class="a" style="left:1310px;top:352px;width:23.3px;height:22.8px;background:#363a40"></div>
<svg class="a" style="left:1317.6px;top:359.4px" width="8" height="8" viewBox="0 0 8 8"><path d="M1 1L7 7M7 1L1 7" stroke="#d8d8d8" stroke-width="1.1"/></svg>
<div class="a" style="left:1334px;top:352px;width:23.3px;height:22.8px;background:#4a4f55"></div>
<svg class="a" style="left:1341.1px;top:358.9px" width="9" height="9" viewBox="0 0 9 9"><rect x="0" y="0.0" width="9" height="1" fill="#dcdcdc"/><rect x="0" y="2.0" width="6" height="1" fill="#dcdcdc"/><rect x="0" y="4.0" width="9" height="1" fill="#dcdcdc"/><rect x="0" y="6.0" width="6" height="1" fill="#dcdcdc"/><rect x="0" y="8.0" width="9" height="1" fill="#dcdcdc"/></svg>
<div class="a" style="left:1358px;top:352px;width:23.3px;height:22.8px;background:#4a4f55"></div>
<svg class="a" style="left:1365.1px;top:358.9px" width="9" height="9" viewBox="0 0 9 9"><rect x="0" y="0.0" width="9" height="1" fill="#dcdcdc"/><rect x="1.5" y="2.0" width="6.0" height="1" fill="#dcdcdc"/><rect x="0" y="4.0" width="9" height="1" fill="#dcdcdc"/><rect x="1.5" y="6.0" width="6.0" height="1" fill="#dcdcdc"/><rect x="0" y="8.0" width="9" height="1" fill="#dcdcdc"/></svg>
<div class="a" style="left:1382px;top:352px;width:23.3px;height:22.8px;background:#4a4f55"></div>
<svg class="a" style="left:1389.1px;top:358.9px" width="9" height="9" viewBox="0 0 9 9"><rect x="0" y="0.0" width="9" height="1" fill="#dcdcdc"/><rect x="3" y="2.0" width="6" height="1" fill="#dcdcdc"/><rect x="0" y="4.0" width="9" height="1" fill="#dcdcdc"/><rect x="3" y="6.0" width="6" height="1" fill="#dcdcdc"/><rect x="0" y="8.0" width="9" height="1" fill="#dcdcdc"/></svg>
<div class="a t" style="left:1203.9px;top:391.10px;font-size:11px;color:#b9bcbf">XL</div>
<div class="a" style="left:1310px;top:385px;width:23.3px;height:22.8px;background:#363a40"></div>
<svg class="a" style="left:1317.6px;top:392.4px" width="8" height="8" viewBox="0 0 8 8"><path d="M1 1L7 7M7 1L1 7" stroke="#d8d8d8" stroke-width="1.1"/></svg>
<div class="a" style="left:1334px;top:385px;width:23.3px;height:22.8px;background:#4a4f55"></div>
<svg class="a" style="left:1341.1px;top:391.9px" width="9" height="9" viewBox="0 0 9 9"><rect x="0" y="0.0" width="9" height="1" fill="#dcdcdc"/><rect x="0" y="2.0" width="6" height="1" fill="#dcdcdc"/><rect x="0" y="4.0" width="9" height="1" fill="#dcdcdc"/><rect x="0" y="6.0" width="6" height="1" fill="#dcdcdc"/><rect x="0" y="8.0" width="9" height="1" fill="#dcdcdc"/></svg>
<div class="a" style="left:1358px;top:385px;width:23.3px;height:22.8px;background:#4a4f55"></div>
<svg class="a" style="left:1365.1px;top:391.9px" width="9" height="9" viewBox="0 0 9 9"><rect x="0" y="0.0" width="9" height="1" fill="#dcdcdc"/><rect x="1.5" y="2.0" width="6.0" height="1" fill="#dcdcdc"/><rect x="0" y="4.0" width="9" height="1" fill="#dcdcdc"/><rect x="1.5" y="6.0" width="6.0" height="1" fill="#dcdcdc"/><rect x="0" y="8.0" width="9" height="1" fill="#dcdcdc"/></svg>
<div class="a" style="left:1382px;top:385px;width:23.3px;height:22.8px;background:#4a4f55"></div>
<svg class="a" style="left:1389.1px;top:391.9px" width="9" height="9" viewBox="0 0 9 9"><rect x="0" y="0.0" width="9" height="1" fill="#dcdcdc"/><rect x="3" y="2.0" width="6" height="1" fill="#dcdcdc"/><rect x="0" y="4.0" width="9" height="1" fill="#dcdcdc"/><rect x="3" y="6.0" width="6" height="1" fill="#dcdcdc"/><rect x="0" y="8.0" width="9" height="1" fill="#dcdcdc"/></svg>
<div class="a t" style="left:1189.3px;top:423.90px;font-size:11px;color:#b9bcbf">Color</div>
<div class="a" style="left:1309.4px;top:417.6px;width:120.3px;height:24px;background:#3e4349;border-radius:2px"></div>
<div class="a t" style="left:1317px;top:423.00px;font-size:13px;color:#f0f0f0">Default</div>
<div class="a" style="left:1411.8px;top:427px;width:0;height:0;border-left:4px solid transparent;border-right:4px solid transparent;border-top:5px solid #f0f0f0"></div>
<div class="a t" style="left:1189.3px;top:457.10px;font-size:11px;color:#b9bcbf">Transformations</div>
<div class="a" style="left:1309.4px;top:450.7px;width:120.3px;height:23.7px;background:#3e4349;border-radius:2px"></div>
<div class="a t" style="left:1317px;top:456.10px;font-size:13px;color:#f0f0f0">None</div>
<div class="a" style="left:1411.8px;top:460px;width:0;height:0;border-left:4px solid transparent;border-right:4px solid transparent;border-top:5px solid #f0f0f0"></div>
<div class="a t" style="left:1189.3px;top:486.50px;font-size:11px;color:#b9bcbf">Monospace</div>
<div class="a" style="left:1399px;top:485.5px;width:30.6px;height:13px;border-radius:6.5px;background:#3a3e44"></div>
<div class="a" style="left:1397.6px;top:483.8px;width:16.4px;height:16.4px;border-radius:50%;background:radial-gradient(circle at 40% 35%,#ffffff,#d6d6d6)"></div>
<div class="a t" style="left:1189.3px;top:513.50px;font-size:11px;color:#b9bcbf">No Wrap</div>
<div class="a" style="left:1399px;top:512.5px;width:30.6px;height:13px;border-radius:6.5px;background:#3a3e44"></div>
<div class="a" style="left:1397.6px;top:510.8px;width:16.4px;height:16.4px;border-radius:50%;background:radial-gradient(circle at 40% 35%,#ffffff,#d6d6d6)"></div>
<div class="a t" style="left:1189.3px;top:540.50px;font-size:11px;color:#b9bcbf">Truncate</div>
<div class="a" style="left:1399px;top:539.5px;width:30.6px;height:13px;border-radius:6.5px;background:#3a3e44"></div>
<div class="a" style="left:1397.6px;top:537.8px;width:16.4px;height:16.4px;border-radius:50%;background:radial-gradient(circle at 40% 35%,#ffffff,#d6d6d6)"></div>
<div class="a" style="left:1445.7px;top:128px;width:5px;height:436px;background:#2c3035"></div>
<div class="a" style="left:1445.7px;top:128px;width:5px;height:290.6px;background:#5d6268"></div>
<div class="a pnl" style="left:1173.5px;top:575px;width:279.5px;height:312px"></div>
<div class="a tabbar" style="left:1173.5px;top:575px;width:279.5px;height:31px;border-bottom:1px solid #26292e"></div>
<div class="a" style="left:1173.5px;top:575px;width:62px;height:31px;background:#393d44"></div>
<div class="a t b" style="left:1186px;top:585.50px;font-size:11px;color:#f2f2f2">Design</div>
<div class="a tri-d" style="left:1190.7px;top:626.5px"></div>
<div class="a t b" style="left:1205px;top:621.70px;font-size:13px;color:#eceded">Pages</div>
<div class="a" style="left:1210.4px;top:691.5px;width:67.1px;height:18.9px;background:#1470c0"></div>
<svg class="a" style="left:1194.3px;top:645.9px" width="11" height="14" viewBox="0 0 11 14"><path d="M0.8 0.8H6.8L10.2 4.2V13.2H0.8Z" fill="none" stroke="#3aa3dc" stroke-width="1.2"/></svg>
<div class="a t" style="left:1214px;top:646.40px;font-size:13px;color:#eceded">cv.html</div>
<svg class="a" style="left:1194.3px;top:669.5px" width="11" height="14" viewBox="0 0 11 14"><path d="M0.8 0.8H6.8L10.2 4.2V13.2H0.8Z" fill="none" stroke="#3aa3dc" stroke-width="1.2"/></svg>
<div class="a t" style="left:1214px;top:670.00px;font-size:13px;color:#eceded">hire-me.html</div>
<svg class="a" style="left:1194.3px;top:693.4px" width="11" height="14" viewBox="0 0 11 14"><path d="M0.8 0.8H6.8L10.2 4.2V13.2H0.8Z" fill="none" stroke="#3aa3dc" stroke-width="1.2"/></svg>
<div class="a t" style="left:1214px;top:693.90px;font-size:13px;color:#eceded">index.html</div>
<svg class="a" style="left:1194.3px;top:717.7px" width="11" height="14" viewBox="0 0 11 14"><path d="M0.8 0.8H6.8L10.2 4.2V13.2H0.8Z" fill="none" stroke="#3aa3dc" stroke-width="1.2"/></svg>
<div class="a t" style="left:1214px;top:718.20px;font-size:13px;color:#eceded">projects-grid-cards.html</div>
<div class="a tri-r" style="left:1191px;top:745.1px"></div>
<div class="a t b" style="left:1205px;top:742.10px;font-size:13px;color:#eceded">Styles</div>
<div class="a tri-r" style="left:1191px;top:769.1px"></div>
<div class="a t b" style="left:1205px;top:766.10px;font-size:13px;color:#eceded">JavaScript</div>
<div class="a tri-r" style="left:1191px;top:792.9px"></div>
<div class="a t b" style="left:1205px;top:789.90px;font-size:13px;color:#eceded">Fonts</div>
<div class="a tri-r" style="left:1191px;top:816.9px"></div>
<div class="a t b" style="left:1205px;top:813.90px;font-size:13px;color:#eceded">Images</div>
<div class="a" style="left:2px;top:881.5px;width:264px;height:5.5px;background:#2f3338;border-top:1px solid #26292e"></div>
<div class="a" style="left:1173.5px;top:884px;width:279.5px;height:3px;background:#2b2e33;border-top:1px solid #25282d"></div>
<div class="a" style="left:1451px;top:47px;width:2px;height:840px;background:#2b2e33"></div>
</body></html>
